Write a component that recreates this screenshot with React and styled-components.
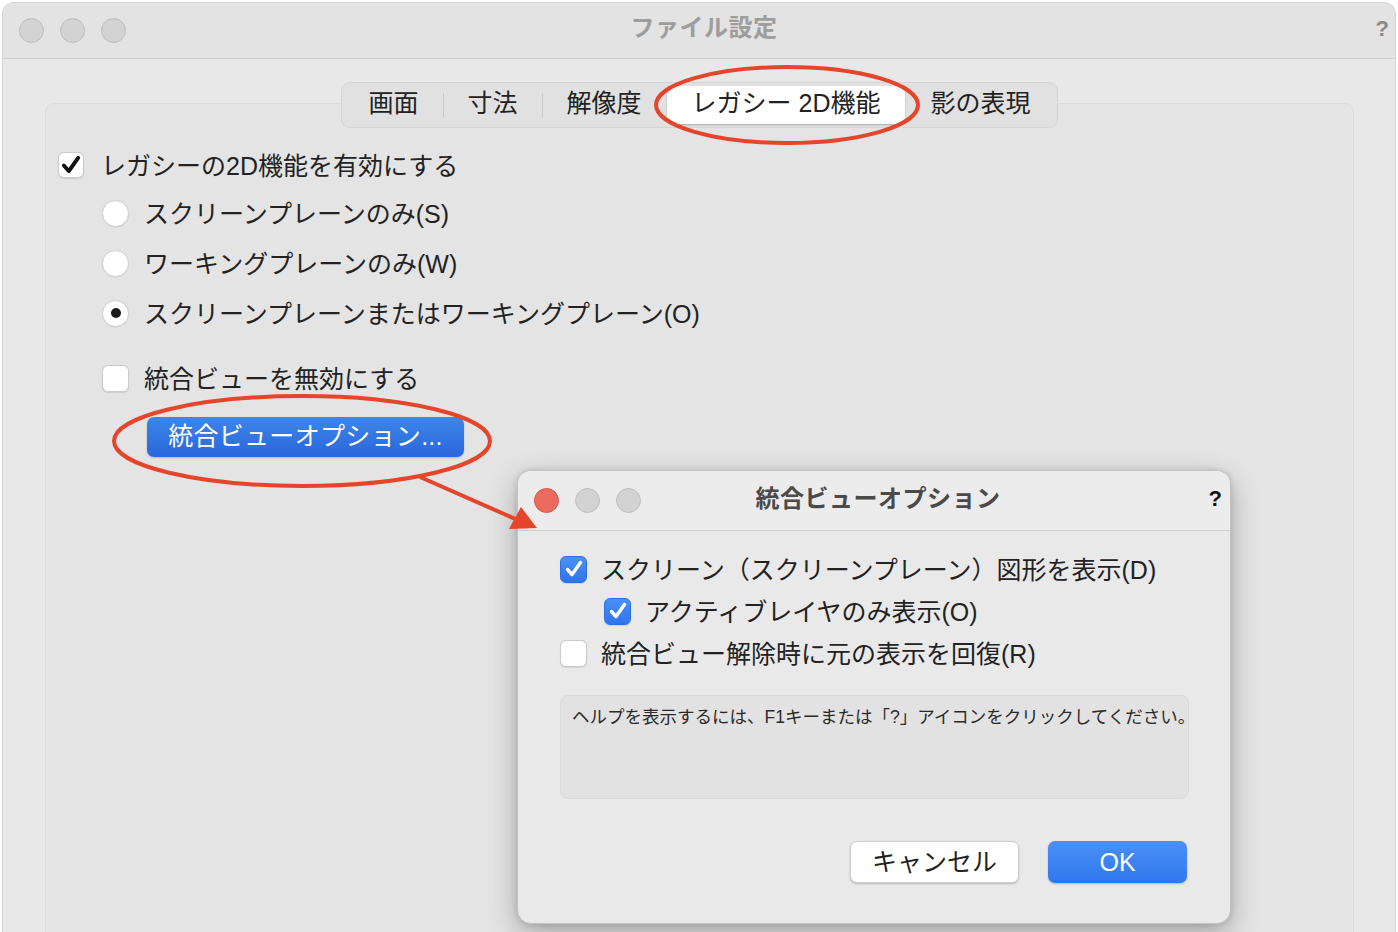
import React from 'react';
import styled, { createGlobalStyle } from 'styled-components';

const GlobalStyle = createGlobalStyle`
  html, body { margin: 0; padding: 0; background: #fff; }
  body {
    font-family: "Liberation Sans", "Noto Sans CJK JP", sans-serif;
    color: #222;
    -webkit-font-smoothing: antialiased;
  }
  * { box-sizing: border-box; }
`;

const Desktop = styled.div`
  position: relative;
  width: 1398px;
  height: 932px;
  overflow: hidden;
  background: #fff;
`;

const Window = styled.div`
  margin: 2px 2px 0 2px;
  height: 930px;
  display: flex;
  flex-direction: column;
  background: #e8e8e8;
  border: 1px solid #d6d6d6;
  border-bottom: none;
  border-radius: 12px 12px 0 0;
  overflow: hidden;
`;

const TitleBar = styled.div`
  height: ${p => p.$h}px;
  flex: none;
  display: grid;
  grid-template-columns: 1fr auto 1fr;
  align-items: center;
  padding: 0 ${p => p.$padR}px 0 ${p => p.$padL}px;
  background: ${p => p.$bg};
  border-bottom: 1px solid #cdcdcd;
`;

const Lights = styled.div`
  display: flex;
  gap: ${p => p.$gap}px;
`;

const Light = styled.span`
  width: 25px;
  height: 25px;
  border-radius: 50%;
  background: ${p => (p.$red ? '#ec6a5e' : '#d3d3d3')};
  border: 1px solid ${p => (p.$red ? '#d5574c' : '#bdbdbd')};
`;

const Title = styled.div`
  font-size: 24px;
  line-height: 1;
  font-weight: 700;
  color: ${p => p.$color};
  letter-spacing: 0.5px;
  padding-bottom: ${p => p.$pb}px;
`;

const Help = styled.div`
  justify-self: end;
  font-family: "Liberation Sans", Arial, sans-serif;
  font-weight: 700;
  font-size: 22px;
  line-height: 1;
  padding-bottom: 3px;
  color: ${p => p.$color};
`;

const Body = styled.div`
  flex: 1;
  display: flex;
  flex-direction: column;
  align-items: center;
  padding: 23px 41px 0 42px;
`;

const TabBar = styled.div`
  position: relative;
  z-index: 1;
  display: flex;
  align-items: center;
  height: 46px;
  margin-bottom: -25px;
  padding: 0 3px;
  background: #e1e1e1;
  border: 1px solid #d4d4d4;
  border-radius: 9px;
`;

const Tab = styled.div`
  height: 38px;
  display: flex;
  align-items: center;
  padding: 0 ${p => (p.$active ? 25 : 24)}px 3px;
  font-size: 25px;
  line-height: 1;
  color: #222;
  border-radius: 7px;
  background: ${p => (p.$active ? '#fff' : 'transparent')};
  box-shadow: ${p => (p.$active ? '0 1px 2px rgba(0,0,0,0.25)' : 'none')};
`;

const TabSep = styled.span`
  width: 1px;
  height: 24px;
  background: ${p => (p.$hidden ? 'transparent' : '#c9c9c9')};
`;

const Panel = styled.div`
  align-self: stretch;
  flex: 1;
  background: #e4e4e4;
  border: 1px solid #dcdcdc;
  border-bottom: none;
  border-radius: 9px 9px 0 0;
  padding: 43px 0 0 12px;
  display: flex;
  flex-direction: column;
`;

const Row = styled.div`
  display: flex;
  align-items: center;
  height: ${p => p.$h || 36}px;
  gap: ${p => p.$gap || 15}px;
  margin-top: ${p => p.$mt || 0}px;
  margin-left: ${p => p.$ml || 0}px;
  font-size: 25px;
  line-height: 1;
  color: #222;
  white-space: nowrap;
`;

const Label = styled.span`
  padding-top: 2px;
`;

const Box = styled.span`
  flex: none;
  width: ${p => p.$size || 27}px;
  height: ${p => p.$size || 27}px;
  border-radius: 6px;
  display: flex;
  align-items: center;
  justify-content: center;
  background: ${p => (p.$blue ? 'linear-gradient(#4b90f6, #2f74ee)' : '#fff')};
  border: 1px solid ${p => (p.$blue ? '#2f6fdf' : '#cbcbcb')};
  box-shadow: 0 0.5px 1px rgba(0,0,0,0.1);
`;

const Radio = styled.span`
  flex: none;
  width: 27px;
  height: 27px;
  border-radius: 50%;
  background: #fff;
  border: 1px solid #d0d0d0;
  display: flex;
  align-items: center;
  justify-content: center;
  box-shadow: 0 0.5px 1px rgba(0,0,0,0.08);
  &::after {
    content: '';
    width: 10px;
    height: 10px;
    border-radius: 50%;
    background: ${p => (p.$on ? '#1c1c1c' : 'transparent')};
  }
`;

const SubGroup = styled.div`
  margin-left: 44px;
  display: flex;
  flex-direction: column;
`;

const BlueButton = styled.button`
  margin: 21px 0 0 45px;
  width: 317px;
  height: 40px;
  border: none;
  border-radius: 7px;
  background: linear-gradient(#3d86e8, #2a66dc);
  color: #fff;
  font-family: inherit;
  font-size: 25px;
  line-height: 1;
  letter-spacing: 0.3px;
  box-shadow: 0 1px 2px rgba(0,0,0,0.2);
  padding: 0 0 1px;
`;

const Dialog = styled.div`
  position: absolute;
  left: 517px;
  top: 470px;
  width: 714px;
  height: 454px;
  z-index: 5;
  display: flex;
  flex-direction: column;
  background: #e9e9e9;
  border: 1px solid #c2c2c2;
  border-radius: 14px;
  overflow: hidden;
  box-shadow: 0 10px 28px rgba(0,0,0,0.28), 0 0 6px rgba(0,0,0,0.12);
`;

const DialogBody = styled.div`
  padding: 21px 41px 0 42px;
  display: flex;
  flex-direction: column;
`;

const HelpBox = styled.div`
  margin-top: 25px;
  height: 104px;
  background: #e2e2e2;
  border: 1px solid #dadada;
  border-radius: 8px;
  padding: 11px 0 0 11px;
  font-size: 17.5px;
  line-height: 1.2;
  color: #2a2a2a;
  white-space: nowrap;
`;

const ButtonRow = styled.div`
  margin-top: 42px;
  display: flex;
  justify-content: flex-end;
  gap: 29px;
  padding-right: 2px;
`;

const DlgButton = styled.button`
  width: ${p => p.$w}px;
  height: 42px;
  border-radius: 7px;
  font-family: inherit;
  font-size: 25px;
  line-height: 1;
  padding: 0;
  border: ${p => (p.$primary ? 'none' : '0.5px solid #d0d0d0')};
  background: ${p => (p.$primary ? 'linear-gradient(#4a90f6, #3077ef)' : '#fff')};
  color: ${p => (p.$primary ? '#fff' : '#222')};
  box-shadow: 0 1px 2px rgba(0,0,0,0.22);
`;

const Overlay = styled.svg`
  position: absolute;
  left: 0;
  top: 0;
  z-index: 10;
  pointer-events: none;
`;

const Check = ({ color = '#111', w = 3.2, size = 20 }) => (
  <svg width={size} height={size} viewBox="0 0 20 20">
    <path d="M3.5 10.5 L8 15.5 L16.5 3.5" fill="none" stroke={color} strokeWidth={w} strokeLinecap="round" strokeLinejoin="round" />
  </svg>
);

const tabs = ['画面', '寸法', '解像度', 'レガシー 2D機能', '影の表現'];
const activeTab = 3;

export default function App() {
  return (
    <Desktop>
      <GlobalStyle />
      <Window>
        <TitleBar $h={56} $bg="#e3e3e3" $padL={16} $padR={6}>
          <Lights $gap={16}>
            <Light />
            <Light />
            <Light />
          </Lights>
          <Title $color="#9d9d9d" $pb={5}>ファイル設定</Title>
          <Help $color="#8a8a8a">?</Help>
        </TitleBar>
        <Body>
          <TabBar>
            {tabs.map((t, i) => (
              <React.Fragment key={t}>
                {i > 0 && <TabSep $hidden={i === activeTab || i === activeTab + 1} />}
                <Tab $active={i === activeTab}>{t}</Tab>
              </React.Fragment>
            ))}
          </TabBar>
          <Panel>
            <Row $gap={17}>
              <Box $size={26}><Check w={3.6} size={22} /></Box>
              <Label>レガシーの2D機能を有効にする</Label>
            </Row>
            <SubGroup>
              <Row $mt={12}><Radio /><Label>スクリーンプレーンのみ(S)</Label></Row>
              <Row $mt={14}><Radio /><Label>ワーキングプレーンのみ(W)</Label></Row>
              <Row $mt={14}><Radio $on /><Label>スクリーンプレーンまたはワーキングプレーン(O)</Label></Row>
              <Row $mt={29}><Box /><Label>統合ビューを無効にする</Label></Row>
              <BlueButton>統合ビューオプション...</BlueButton>
            </SubGroup>
          </Panel>
        </Body>
      </Window>

      <Dialog>
        <TitleBar $h={60} $bg="#ececec" $padL={16} $padR={8}>
          <Lights $gap={16}>
            <Light $red />
            <Light />
            <Light />
          </Lights>
          <Title $color="#4a4a4a" $pb={4}>統合ビューオプション</Title>
          <Help $color="#111">?</Help>
        </TitleBar>
        <DialogBody>
          <Row $h={34} $gap={14}>
            <Box $blue><Check color="#fff" w={3.4} /></Box>
            <Label>スクリーン（スクリーンプレーン）図形を表示(D)</Label>
          </Row>
          <Row $h={34} $gap={14} $mt={8} $ml={44}>
            <Box $blue><Check color="#fff" w={3.4} /></Box>
            <Label>アクティブレイヤのみ表示(O)</Label>
          </Row>
          <Row $h={34} $gap={14} $mt={8}>
            <Box />
            <Label>統合ビュー解除時に元の表示を回復(R)</Label>
          </Row>
          <HelpBox>ヘルプを表示するには、F1キーまたは「?」アイコンをクリックしてください。</HelpBox>
          <ButtonRow>
            <DlgButton $w={169}>キャンセル</DlgButton>
            <DlgButton $w={139} $primary>OK</DlgButton>
          </ButtonRow>
        </DialogBody>
      </Dialog>

      <Overlay width="1398" height="932" viewBox="0 0 1398 932">
        <ellipse cx="787" cy="105" rx="131" ry="38" fill="none" stroke="#e5452b" strokeWidth="4" />
        <ellipse cx="302" cy="441" rx="188" ry="45" fill="none" stroke="#e5452b" strokeWidth="4" />
        <line x1="420" y1="477" x2="520" y2="521" stroke="#e5452b" strokeWidth="4" />
        <polygon points="537,528 509,529 521,507" fill="#e5452b" />
      </Overlay>
    </Desktop>
  );
}
